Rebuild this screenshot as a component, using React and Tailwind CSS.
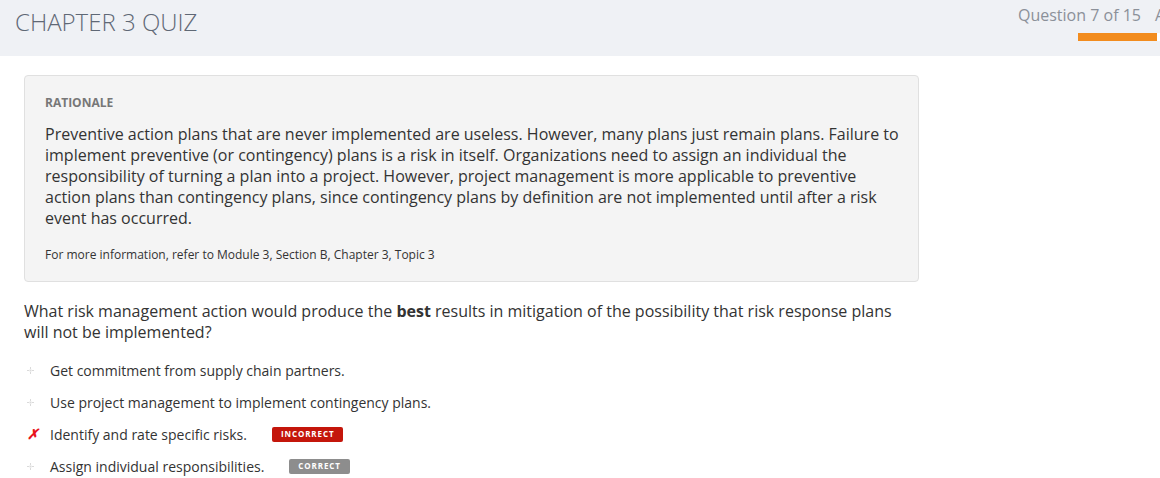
import React from "react";

const OPTIONS = [
  { text: "Get commitment from supply chain partners.", mark: "dot" },
  { text: "Use project management to implement contingency plans.", mark: "dot" },
  { text: "Identify and rate specific risks.", mark: "x", badge: "INCORRECT" },
  { text: "Assign individual responsibilities.", mark: "dot", badge: "CORRECT" },
];

function Bullet() {
  return (
    <svg width="7" height="7" viewBox="0 0 7 7" className="shrink-0">
      <rect x="3" y="0.5" width="1" height="1" fill="#b5b5b5" />
      <rect x="0.5" y="3" width="1" height="1" fill="#b5b5b5" />
      <rect x="5.5" y="3" width="1" height="1" fill="#b5b5b5" />
      <rect x="3" y="5.5" width="1" height="1" fill="#b5b5b5" />
      <rect x="2.5" y="2.5" width="2" height="2" fill="#dcdcdc" />
    </svg>
  );
}

export default function App() {
  return (
    <div className="min-h-[478px] bg-white text-[#333] font-['Open_Sans',sans-serif]">
      {/* Header */}
      <div className="h-[56px] bg-[#eff1f5] flex overflow-hidden">
        <div className="w-[1018px] shrink-0 pl-[15px] pt-[4px]">
          <h1 className="text-[24px] font-light text-[#5f6875] leading-[36px]">CHAPTER 3 QUIZ</h1>
        </div>
        <div className="shrink-0 pt-[3px]">
          <div className="flex gap-[14px] text-[16px] leading-[24px] text-[#8b9099] whitespace-nowrap">
            <span>Question 7 of 15</span>
            <span>Answered</span>
          </div>
          <div className="ml-[60px] mt-[6px] w-[170px] h-[8px] bg-white flex">
            <div className="w-[79px] h-full bg-[#f28c1e]" />
          </div>
        </div>
      </div>

      {/* Content */}
      <div className="px-[24px] pt-[19px] w-[943px]">
        <div className="bg-[#f4f4f4] border border-[#e0e0e0] rounded-[4px] pl-[20px] pr-[16px] pt-[18px] pb-[17px]">
          <div className="text-[12px] font-bold text-[#777] leading-[18px]">RATIONALE</div>
          <p className="mt-[12px] text-[16px] leading-[21px] text-[#333]">
            Preventive action plans that are never implemented are useless. However, many plans just remain plans. Failure to implement preventive (or contingency) plans is a risk in itself. Organizations need to assign an individual the responsibility of turning a plan into a project. However, project management is more applicable to preventive action plans than contingency plans, since contingency plans by definition are not implemented until after a risk event has occurred.
          </p>
          <p className="mt-[17px] text-[12px] leading-[18px] text-[#333]">
            For more information, refer to Module 3, Section B, Chapter 3, Topic 3
          </p>
        </div>

        <p className="mt-[19px] text-[16px] leading-[21px] text-[#333]">
          What risk management action would produce the <b className="font-bold">best</b> results in mitigation of the possibility that risk response plans will not be implemented?
        </p>

        <ul className="mt-[11px] flex flex-col">
          {OPTIONS.map((o) => (
            <li key={o.text} className="h-[32px] flex items-center text-[14px] text-[#333]">
              <span className="w-[26px] flex items-center pl-[3px]">
                {o.mark === "x" ? (
                  <span className="text-[#e8141c] text-[14px] font-bold italic leading-none">✗</span>
                ) : (
                  <Bullet />
                )}
              </span>
              <span>{o.text}</span>
              {o.badge && (
                <span
                  className={`ml-[25px] h-[15px] px-[9px] rounded-[2px] text-[8px] font-bold tracking-[0.9px] text-white flex items-center ${
                    o.badge === "INCORRECT" ? "bg-[#c4160b]" : "bg-[#8d8d8d]"
                  }`}
                >
                  {o.badge}
                </span>
              )}
            </li>
          ))}
        </ul>
      </div>
    </div>
  );
}
